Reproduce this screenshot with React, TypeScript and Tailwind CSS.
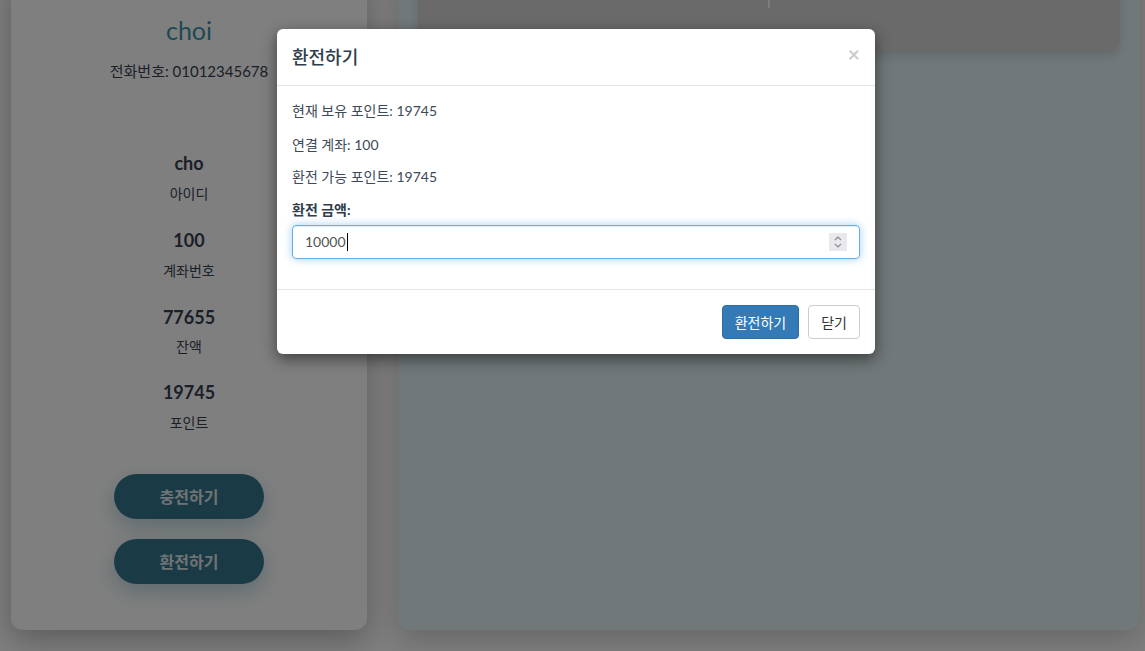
export default function App() {
  const font = { fontFamily: "Lato, 'Noto Sans CJK KR', sans-serif" };

  return (
    <div className="relative h-[651px] w-[1145px] overflow-hidden bg-[#fefefe]" style={font}>
      {/* page underneath */}
      <div className="flex h-full items-end gap-[31px] pb-[21px] pl-[11px]">
        <div className="flex w-[356px] flex-col items-center rounded-xl bg-white pt-[40px] pb-[46px] text-[#374151] shadow-[0_10px_30px_rgba(0,0,0,0.28)]">
          <div className="text-[25px] leading-[32px] text-[#3c93a8]">choi</div>
          <div className="mt-[13px] text-[15px] leading-[24px]">전화번호: 01012345678</div>

          <div className="mt-[66px] text-[18px] font-bold leading-[28px]">cho</div>
          <div className="mt-[7px] text-[14px] leading-[20px]">아이디</div>

          <div className="mt-[22px] text-[18px] font-bold leading-[28px]">100</div>
          <div className="mt-[7px] text-[14px] leading-[20px]">계좌번호</div>

          <div className="mt-[22px] text-[18px] font-bold leading-[28px]">77655</div>
          <div className="mt-[6px] text-[14px] leading-[20px]">잔액</div>

          <div className="mt-[21px] text-[18px] font-bold leading-[28px]">19745</div>
          <div className="mt-[7px] text-[14px] leading-[20px]">포인트</div>

          <button className="mt-[41px] h-[45px] w-[150px] rounded-full bg-[#35768c] text-[16px] font-bold text-[#dfe7ea] shadow-[0_8px_22px_rgba(66,138,164,0.35)]">
            충전하기
          </button>
          <button className="mt-[20px] h-[45px] w-[150px] rounded-full bg-[#35768c] text-[16px] font-bold text-[#dfe7ea] shadow-[0_8px_22px_rgba(66,138,164,0.35)]">
            환전하기
          </button>
        </div>

        <div className="flex h-[690px] w-[742px] flex-col rounded-xl bg-[#e2f0f2] px-[20px] shadow-[0_10px_30px_rgba(0,0,0,0.2)]">
          <div className="mt-[-8px] flex h-[120px] justify-center rounded-xl bg-[#d4d4d4] shadow-[0_4px_10px_rgba(0,0,0,0.12)]">
            <div className="mt-[68px] h-[8px] w-[2px] bg-[#fafafa]" />
          </div>
        </div>
      </div>

      {/* modal backdrop */}
      <div className="absolute inset-0 bg-black/50" />

      {/* modal */}
      <div className="absolute inset-0 pl-[277px] pt-[29px]">
        <div className="w-[598px] rounded-[6px] bg-white shadow-[0_5px_15px_rgba(0,0,0,0.5)]">
          <div className="flex items-center justify-between border-b border-[#e5e5e5] px-[15px] py-[15px]">
            <h4 className="text-[18px] font-medium leading-[26px] text-[#2f3d4c]">환전하기</h4>
            <span className="mt-[-8px] text-[21px] font-bold leading-none text-[#cccccc]">×</span>
          </div>

          <div className="px-[15px] pt-[15px] pb-[15px] text-[14px] leading-[20px] text-[#3d4a59]">
            <p>현재 보유 포인트: 19745</p>
            <p className="mt-[14px]">연결 계좌: 100</p>
            <p className="mt-[12px]">환전 가능 포인트: 19745</p>
            <div className="mb-[15px] mt-[13px]">
              <label className="mb-[5px] block font-bold text-[#2f3d4c]">환전 금액:</label>
              <div className="flex h-[34px] items-center rounded-[4px] border border-[#66afe9] pl-[12px] pr-[12px] shadow-[inset_0_1px_1px_rgba(0,0,0,0.075),0_0_8px_rgba(102,175,233,0.6)]">
                <span className="text-[14px] text-[#555]">10000</span>
                <span className="ml-px h-[18px] w-px bg-black" />
                <div className="ml-auto flex h-[18px] w-[18px] flex-col items-center justify-center bg-[#e9e9ed]">
                  <svg width="10" height="16" viewBox="0 0 10 16" fill="none" stroke="#8a8a8f" strokeWidth="1.2">
                    <path d="M2 6 L5 3 L8 6" />
                    <path d="M2 10 L5 13 L8 10" />
                  </svg>
                </div>
              </div>
            </div>
          </div>

          <div className="flex justify-end gap-[9px] border-t border-[#e5e5e5] p-[15px]">
            <button className="h-[34px] rounded-[4px] border border-[#2e6da4] bg-[#337ab7] px-[12px] text-[14px] text-white">
              환전하기
            </button>
            <button className="h-[34px] rounded-[4px] border border-[#cccccc] bg-white px-[12px] text-[14px] text-[#333]">
              닫기
            </button>
          </div>
        </div>
      </div>
    </div>
  );
}
